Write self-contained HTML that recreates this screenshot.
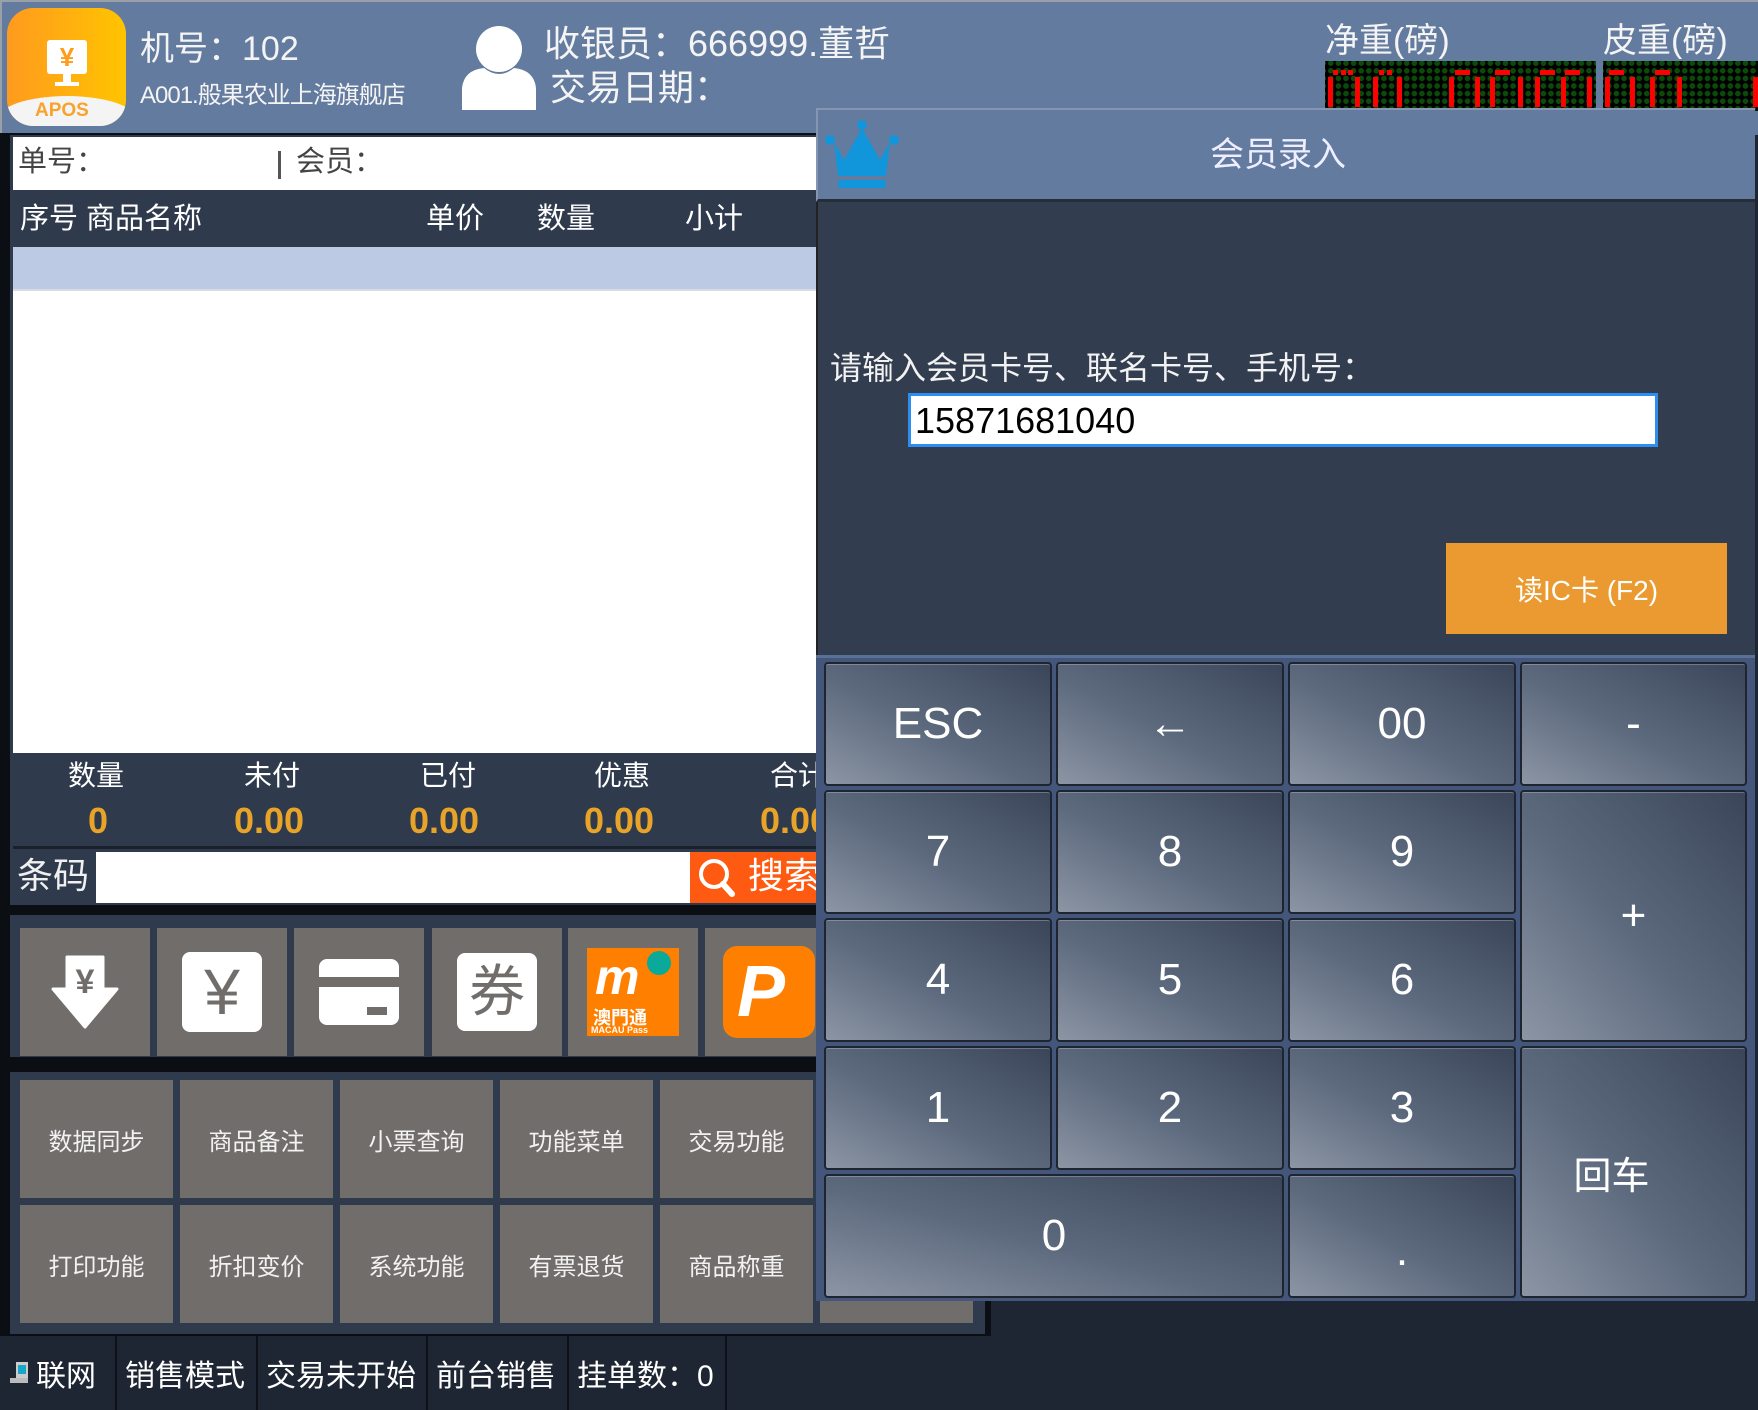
<!DOCTYPE html>
<html><head><meta charset="utf-8">
<style>
*{margin:0;padding:0;box-sizing:border-box}
body{width:1758px;height:1410px;position:relative;overflow:hidden;background:#1f2633;font-family:"Liberation Sans","Noto Sans CJK SC",sans-serif;color:#fff}
.a{position:absolute}
.t{position:absolute;white-space:nowrap;line-height:1}
.key{position:absolute;border:2px solid #1e2430;border-radius:4px;background:linear-gradient(to top right,#8c95a4 0%,#5d6a7e 45%,#3a4559 100%);box-shadow:inset 0 1px 0 rgba(255,255,255,.25);display:flex;align-items:center;justify-content:center;font-size:44px;color:#fff;font-family:"Liberation Sans","Noto Sans CJK SC",sans-serif}
.tile{position:absolute;background:#716d6b;display:flex;align-items:center;justify-content:center;font-size:24px;color:#f2f2f2}
.st{position:absolute;top:1336px;height:74px;border-right:2px solid #0e1218;display:flex;align-items:center;font-size:30px;padding-left:8px}
.led{position:absolute;background-color:#000;background-image:radial-gradient(circle,#0c4a0c 2.6px,transparent 3px);background-size:7.6px 7.6px;background-position:2px 6px}
</style></head><body>
<!-- header -->
<div class="a" style="left:0;top:0;width:1758px;height:135px;background:#637b9f;border-top:2px solid #9aa0a8;border-left:2px solid #9aa0a8"></div>
<div class="a" style="left:7px;top:8px;width:119px;height:118px;border-radius:26px;overflow:hidden;background:linear-gradient(90deg,#ff9a1e,#ffc400)">
  <div class="a" style="left:-10px;top:88px;width:140px;height:60px;border-radius:50% 50% 0 0/24px 24px 0 0;background:#f4f4f4"></div>
  <div class="a" style="left:40px;top:32px;width:40px;height:34px;background:#fff;border-radius:3px;color:#ff9c1c;font-size:26px;font-weight:bold;text-align:center;line-height:34px">¥</div>
  <div class="a" style="left:56px;top:66px;width:8px;height:8px;background:#fff"></div>
  <div class="a" style="left:48px;top:74px;width:24px;height:4px;background:#fff"></div>
  <div class="t" style="left:28px;top:93px;font-size:19px;font-weight:bold;color:#f9a22c">APOS</div>
</div>
<div class="t" style="left:140px;top:32px;font-size:34px;color:#f4f4f4">机号：102</div>
<div class="t" style="left:140px;top:84px;font-size:24px;color:#f4f4f4;letter-spacing:-1px">A001.般果农业上海旗舰店</div>
<svg class="a" style="left:458px;top:26px" width="82" height="84" viewBox="0 0 82 84"><ellipse cx="41" cy="23" rx="23" ry="23" fill="#fff"/><path d="M4 84 L4 62 Q6 44 26 42 Q41 54 56 42 Q76 44 78 62 L78 84 Z" fill="#fff"/></svg>
<div class="t" style="left:544px;top:26px;font-size:36px;color:#f4f4f4">收银员：666999.董哲</div>
<div class="t" style="left:550px;top:70px;font-size:36px;color:#f4f4f4">交易日期：</div>
<div class="t" style="left:1325px;top:24px;font-size:34px;color:#f4f4f4">净重(磅)</div>
<div class="t" style="left:1603px;top:24px;font-size:34px;color:#f4f4f4">皮重(磅)</div>
<div class="led" style="left:1325px;top:61px;width:271px;height:50px"></div>
<div class="led" style="left:1603px;top:61px;width:160px;height:50px"></div>
<svg class="a" style="left:1325px;top:61px" width="433" height="50">
<g fill="#f00">
<rect x="8" y="9" width="5" height="5"/><rect x="16" y="9" width="5" height="5"/><rect x="23" y="9" width="5" height="5"/><rect x="54" y="9" width="5" height="5"/><rect x="62" y="9" width="5" height="5"/>
<rect x="3" y="16" width="5" height="30"/><rect x="30" y="16" width="5" height="30"/><rect x="48" y="16" width="5" height="30"/><rect x="72" y="16" width="5" height="30"/>
<rect x="130" y="9" width="15" height="5"/><rect x="170" y="9" width="15" height="5"/><rect x="215" y="9" width="15" height="5"/><rect x="240" y="9" width="15" height="5"/>
<rect x="124" y="16" width="5" height="30"/><rect x="150" y="16" width="5" height="30"/><rect x="165" y="16" width="5" height="30"/><rect x="193" y="16" width="5" height="30"/><rect x="210" y="16" width="5" height="30"/><rect x="236" y="16" width="5" height="30"/><rect x="262" y="16" width="5" height="30"/>
<rect x="284" y="9" width="15" height="5"/><rect x="330" y="9" width="15" height="5"/><rect x="280" y="16" width="5" height="30"/><rect x="305" y="16" width="5" height="30"/><rect x="325" y="16" width="5" height="30"/><rect x="352" y="16" width="5" height="30"/><rect x="428" y="16" width="5" height="30"/>
</g></svg>

<!-- left panel -->
<div class="a" style="left:0;top:133px;width:985px;height:1203px;background:#0b0e13"></div>
<div class="a" style="left:10px;top:135px;width:975px;height:922px;background:#2f3a4d"></div>
<div class="a" style="left:13px;top:137px;width:803px;height:53px;background:#fff"></div>
<div class="t" style="left:18px;top:148px;font-size:29px;color:#444">单号：</div>
<div class="a" style="left:278px;top:151px;width:3px;height:28px;background:#555"></div>
<div class="t" style="left:296px;top:148px;font-size:29px;color:#444">会员：</div>
<div class="a" style="left:13px;top:193px;width:803px;height:54px;background:#2f3a4d"></div>
<div class="t" style="left:20px;top:205px;font-size:29px">序号 商品名称</div>
<div class="t" style="left:426px;top:205px;font-size:29px">单价</div>
<div class="t" style="left:537px;top:205px;font-size:29px">数量</div>
<div class="t" style="left:685px;top:205px;font-size:29px">小计</div>
<div class="a" style="left:13px;top:247px;width:803px;height:44px;background:#bccae4;border-bottom:2px solid #d6dde8"></div>
<div class="a" style="left:13px;top:291px;width:803px;height:462px;background:#fff"></div>
<div class="t" style="left:68px;top:762px;font-size:28px">数量</div>
<div class="t" style="left:244px;top:762px;font-size:28px">未付</div>
<div class="t" style="left:420px;top:762px;font-size:28px">已付</div>
<div class="t" style="left:594px;top:762px;font-size:28px">优惠</div>
<div class="t" style="left:770px;top:762px;font-size:28px">合计</div>
<div class="t" style="left:88px;top:803px;font-size:36px;font-weight:bold;color:#e8a428">0</div>
<div class="t" style="left:234px;top:803px;font-size:36px;font-weight:bold;color:#e8a428">0.00</div>
<div class="t" style="left:409px;top:803px;font-size:36px;font-weight:bold;color:#e8a428">0.00</div>
<div class="t" style="left:584px;top:803px;font-size:36px;font-weight:bold;color:#e8a428">0.00</div>
<div class="t" style="left:760px;top:803px;font-size:36px;font-weight:bold;color:#e8a428">0.00</div>
<div class="a" style="left:13px;top:846px;width:803px;height:3px;background:#1a212c"></div>
<div class="t" style="left:17px;top:858px;font-size:36px;color:#f0f0f0">条码</div>
<div class="a" style="left:96px;top:852px;width:594px;height:51px;background:#fff"></div>
<div class="a" style="left:690px;top:852px;width:126px;height:51px;background:#ff5a12"></div>
<svg class="a" style="left:697px;top:857px" width="40" height="42"><circle cx="17" cy="17" r="13" fill="none" stroke="#fff" stroke-width="4"/><line x1="26" y1="27" x2="35" y2="37" stroke="#fff" stroke-width="6" stroke-linecap="round"/></svg>
<div class="t" style="left:748px;top:858px;font-size:36px">搜索</div>
<div class="a" style="left:10px;top:905px;width:975px;height:10px;background:#0b0e13"></div>
<div class="tile" style="left:20px;top:928px;width:130px;height:128px">
<svg width="68" height="74" viewBox="0 0 68 74"><path d="M16 2 H52 V34 H66 L34 72 L2 34 H16 Z" fill="#fff" stroke="#fff" stroke-linejoin="round" stroke-width="3"/><text x="34" y="38" text-anchor="middle" font-size="34" font-weight="bold" fill="#716d6b" font-family="Liberation Sans">¥</text></svg></div>
<div class="tile" style="left:157px;top:928px;width:130px;height:128px"><div style="width:80px;height:80px;background:#fff;border-radius:8px;color:#716d6b;font-size:64px;text-align:center;line-height:80px">¥</div></div>
<div class="tile" style="left:294px;top:928px;width:130px;height:128px"><div style="position:relative;width:80px;height:66px;background:#fff;border-radius:8px"><div style="position:absolute;left:0;top:18px;width:80px;height:10px;background:#716d6b"></div><div style="position:absolute;left:48px;top:48px;width:20px;height:8px;background:#716d6b"></div></div></div>
<div class="tile" style="left:432px;top:928px;width:130px;height:128px"><div style="width:80px;height:78px;background:#fff;border-radius:8px;color:#716d6b;font-size:56px;text-align:center;line-height:78px">券</div></div>
<div class="tile" style="left:568px;top:928px;width:130px;height:128px"><div style="position:relative;width:92px;height:88px;background:#ff7f00;overflow:hidden"><div style="position:absolute;left:8px;top:4px;font-size:50px;font-weight:bold;font-style:italic;color:#fff;line-height:1">m</div><div style="position:absolute;left:60px;top:3px;width:24px;height:24px;border-radius:50%;background:#0aa99a"></div><div style="position:absolute;left:6px;top:56px;font-size:18px;font-weight:bold;color:#fff">澳門通</div><div style="position:absolute;left:4px;top:77px;font-size:9px;font-weight:bold;color:#fff">MACAU Pass</div></div></div>
<div class="tile" style="left:705px;top:928px;width:130px;height:128px;justify-content:flex-start;padding-left:18px"><div style="width:92px;height:92px;background:#ff7f00;border-radius:14px;color:#fff;font-size:72px;font-weight:bold;font-style:italic;line-height:92px;padding-left:14px">P</div></div>
<div class="a" style="left:10px;top:1063px;width:975px;height:9px;background:#0b0e13"></div>
<div class="a" style="left:10px;top:1072px;width:975px;height:262px;background:#2f3a4d"></div>
<div class="tile" style="left:20px;top:1080px;width:153px;height:118px">数据同步</div>
<div class="tile" style="left:180px;top:1080px;width:153px;height:118px">商品备注</div>
<div class="tile" style="left:340px;top:1080px;width:153px;height:118px">小票查询</div>
<div class="tile" style="left:500px;top:1080px;width:153px;height:118px">功能菜单</div>
<div class="tile" style="left:660px;top:1080px;width:153px;height:118px">交易功能</div>
<div class="tile" style="left:820px;top:1080px;width:153px;height:118px"></div>
<div class="tile" style="left:20px;top:1205px;width:153px;height:118px">打印功能</div>
<div class="tile" style="left:180px;top:1205px;width:153px;height:118px">折扣变价</div>
<div class="tile" style="left:340px;top:1205px;width:153px;height:118px">系统功能</div>
<div class="tile" style="left:500px;top:1205px;width:153px;height:118px">有票退货</div>
<div class="tile" style="left:660px;top:1205px;width:153px;height:118px">商品称重</div>
<div class="tile" style="left:820px;top:1205px;width:153px;height:118px"></div>
<div class="a" style="left:985px;top:1300px;width:773px;height:36px;background:#1f2633;border-left:6px solid #0b0e13"></div>

<!-- status bar -->
<div class="st" style="left:0;width:117px"><svg width="22" height="26" style="margin-right:6px"><rect x="8" y="2" width="12" height="16" fill="#ccc"/><rect x="10" y="5" width="8" height="9" fill="#19a7c9"/><rect x="2" y="18" width="18" height="5" fill="#bbb"/></svg>联网</div>
<div class="st" style="left:117px;width:141px">销售模式</div>
<div class="st" style="left:258px;width:170px">交易未开始</div>
<div class="st" style="left:428px;width:141px">前台销售</div>
<div class="st" style="left:569px;width:158px">挂单数：0</div>

<!-- dialog -->
<div class="a" style="left:816px;top:108px;width:939px;height:94px;background:#637b9f;border-top:2px solid #8696b2;border-left:2px solid #8696b2;border-bottom:3px solid #252d3a"></div>
<svg class="a" style="left:824px;top:120px" width="76" height="70" viewBox="0 0 76 70"><path d="M10 22 L20 40 L38 8 L56 40 L66 22 L62 56 H14 Z" fill="#1296db"/><circle cx="6" cy="20" r="5" fill="#1296db"/><circle cx="70" cy="20" r="5" fill="#1296db"/><circle cx="38" cy="5" r="5" fill="#1296db"/><rect x="14" y="60" width="48" height="8" rx="3" fill="#1296db"/></svg>
<div class="t" style="left:1210px;top:138px;font-size:34px;color:#eef">会员录入</div>
<div class="a" style="left:816px;top:202px;width:939px;height:455px;background:#323d50;border-left:2px solid #222"></div>
<div class="t" style="left:830px;top:352px;font-size:32px;color:#f2f2f2">请输入会员卡号、联名卡号、手机号：</div>
<div class="a" style="left:908px;top:393px;width:750px;height:54px;background:#fff;border:3px solid #2e8ef0"></div>
<div class="t" style="left:915px;top:403px;font-size:36px;color:#000">15871681040</div>
<div class="a" style="left:1446px;top:543px;width:281px;height:91px;background:#ea9a30;display:flex;align-items:center;justify-content:center;font-size:28px;color:#fff">读IC卡 (F2)</div>
<div class="a" style="left:816px;top:655px;width:939px;height:646px;background:#44577a;border-top:3px solid #5a7096"></div>
<div class="key" style="left:824px;top:662px;width:228px;height:124px">ESC</div>
<div class="key" style="left:1056px;top:662px;width:228px;height:124px">←</div>
<div class="key" style="left:1288px;top:662px;width:228px;height:124px">00</div>
<div class="key" style="left:1520px;top:662px;width:227px;height:124px">-</div>
<div class="key" style="left:824px;top:790px;width:228px;height:124px">7</div>
<div class="key" style="left:1056px;top:790px;width:228px;height:124px">8</div>
<div class="key" style="left:1288px;top:790px;width:228px;height:124px">9</div>
<div class="key" style="left:1520px;top:790px;width:227px;height:252px">+</div>
<div class="key" style="left:824px;top:918px;width:228px;height:124px">4</div>
<div class="key" style="left:1056px;top:918px;width:228px;height:124px">5</div>
<div class="key" style="left:1288px;top:918px;width:228px;height:124px">6</div>
<div class="key" style="left:824px;top:1046px;width:228px;height:124px">1</div>
<div class="key" style="left:1056px;top:1046px;width:228px;height:124px">2</div>
<div class="key" style="left:1288px;top:1046px;width:228px;height:124px">3</div>
<div class="key" style="left:1520px;top:1046px;width:227px;height:252px;font-size:38px;padding-right:44px">回车</div>
<div class="key" style="left:824px;top:1174px;width:460px;height:124px">0</div>
<div class="key" style="left:1288px;top:1174px;width:228px;height:124px;padding-top:30px">.</div>
</body></html>
